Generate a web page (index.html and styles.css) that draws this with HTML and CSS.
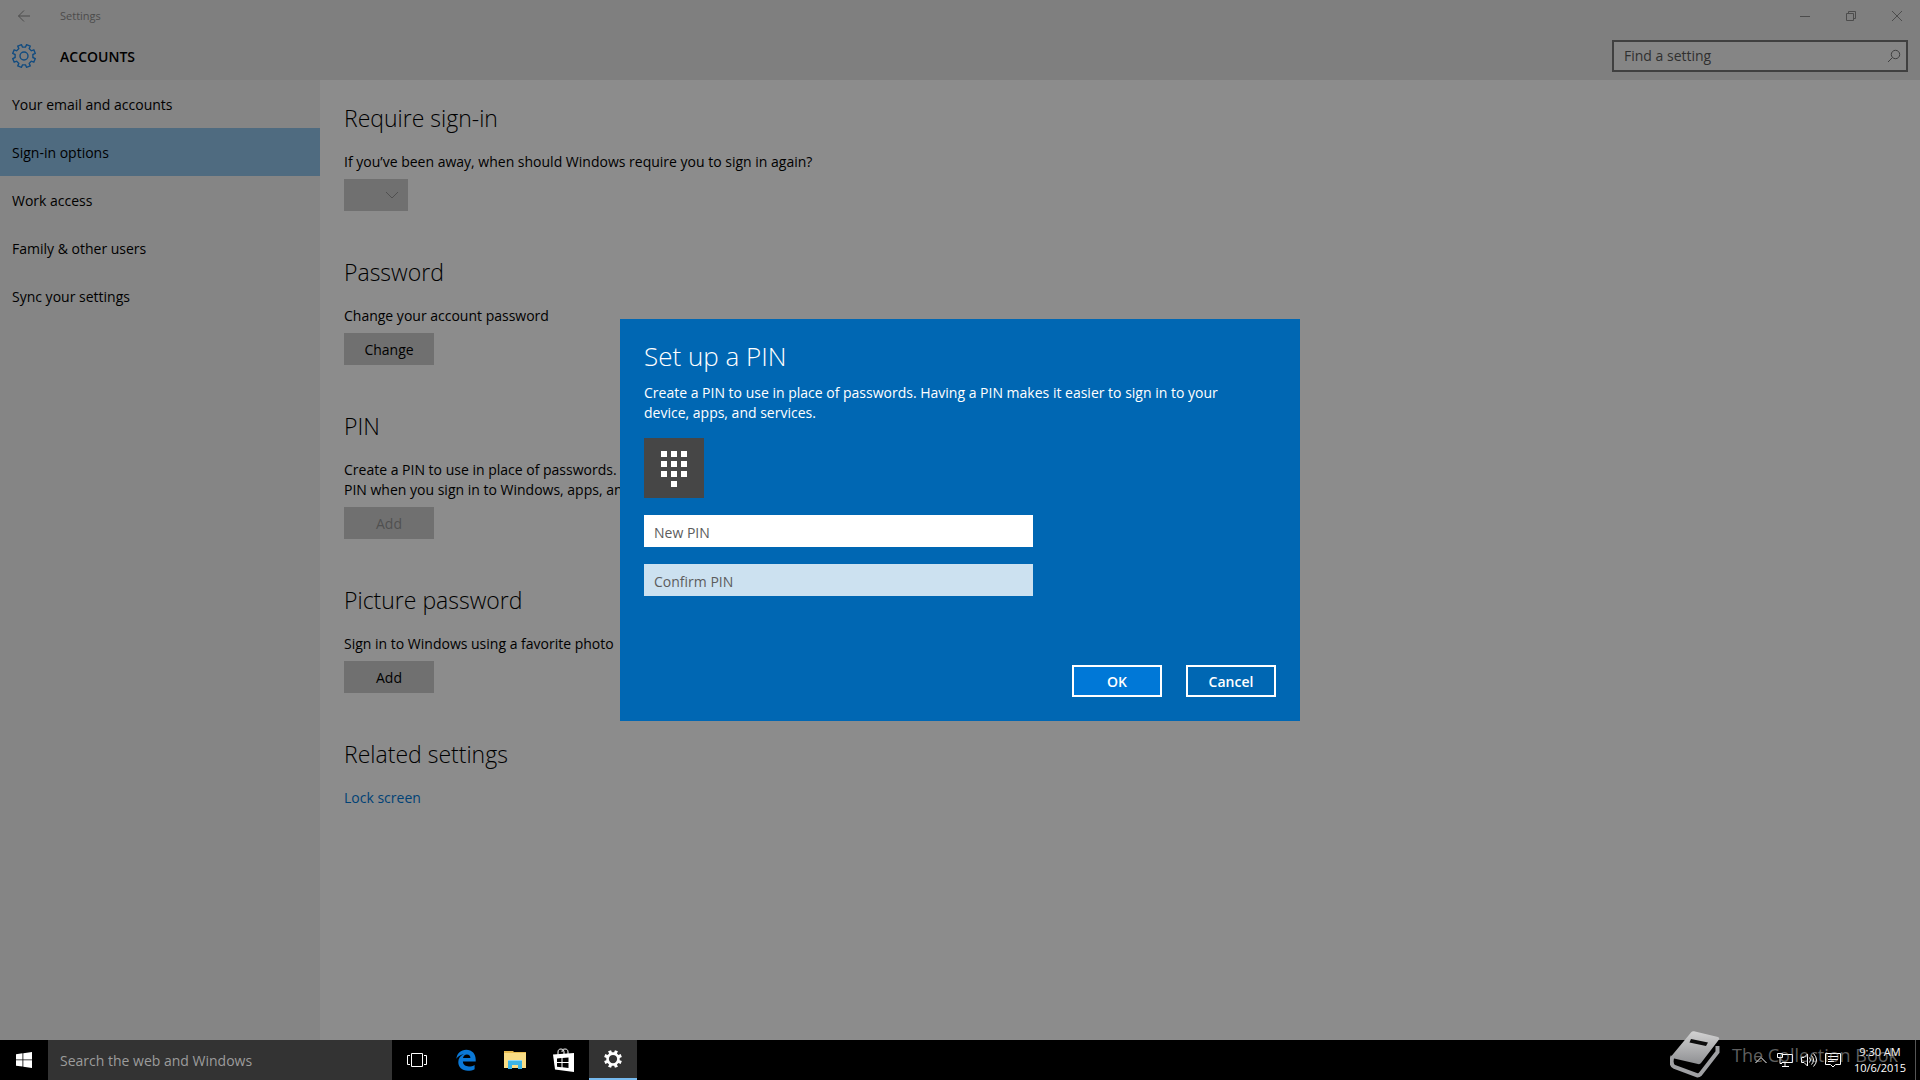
FILE: index.html
```html
<!DOCTYPE html>
<html lang="en">
<head>
  <meta charset="UTF-8">
  <meta name="viewport" content="width=device-width, initial-scale=1.0">
  <title>Settings</title>

  <link rel="stylesheet" href="styles.css">
</head>
<body>

  <svg class="defs" width="0" height="0" aria-hidden="true">
    <symbol id="gear" viewBox="-12 -12 24 24">
      <path d="M8.9 1.5L11.3 2.6 9.8 6.2 7.3 5.2 5.2 7.3 6.2 9.8 2.6 11.3 1.5 8.9-1.5 8.9-2.6 11.3-6.2 9.8-5.2 7.3-7.3 5.2-9.8 6.2-11.3 2.6-8.9 1.5-8.9-1.5-11.3-2.6-9.8-6.2-7.3-5.2-5.2-7.3-6.2-9.8-2.6-11.3-1.5-8.9 1.5-8.9 2.6-11.3 6.2-9.8 5.2-7.3 7.3-5.2 9.8-6.2 11.3-2.6 8.9-1.5z"/>
      <circle r="4"/>
    </symbol>
  </svg>

  <div class="window">
    <header class="header">
      <div class="titlebar">
        <button class="back" aria-label="Back">
          <svg width="14" height="14" viewBox="0 0 14 14"><path d="M13 7H1.5M7 1.5L1.5 7 7 12.5"/></svg>
        </button>
        <span class="window-title">Settings</span>
        <div class="window-buttons">
          <button aria-label="Minimize">
            <svg width="12" height="12" viewBox="0 0 12 12"><path d="M1 6.5h10"/></svg>
          </button>
          <button aria-label="Restore">
            <svg width="12" height="12" viewBox="0 0 12 12"><path d="M1.5 3.5h7v7h-7zM3.5 3.5v-2h7v7h-2"/></svg>
          </button>
          <button aria-label="Close">
            <svg width="12" height="12" viewBox="0 0 12 12"><path d="M1 1l10 10M11 1L1 11"/></svg>
          </button>
        </div>
      </div>
      <div class="header-row">
        <svg class="header-gear" width="24" height="24"><use href="#gear"/></svg>
        <h1>ACCOUNTS</h1>
        <div class="find">
          <input type="text" placeholder="Find a setting" aria-label="Find a setting">
          <svg width="14" height="14" viewBox="0 0 14 14"><circle cx="8.5" cy="5.5" r="4.2"/><path d="M5.5 8.5L1 13"/></svg>
        </div>
      </div>
    </header>

    <div class="body">
      <nav class="sidebar">
        <a href="#">Your email and accounts</a>
        <a href="#" class="active">Sign-in options</a>
        <a href="#">Work access</a>
        <a href="#">Family &amp; other users</a>
        <a href="#">Sync your settings</a>
      </nav>

      <main class="content">
        <section>
          <h2>Require sign-in</h2>
          <label for="require">If you’ve been away, when should Windows require you to sign in again?</label>
          <div class="select">
            <select id="require" disabled></select>
            <svg width="14" height="8" viewBox="0 0 14 8"><path d="M1 1l6 6 6-6"/></svg>
          </div>
        </section>
        <section>
          <h2>Password</h2>
          <p>Change your account password</p>
          <button class="btn">Change</button>
        </section>
        <section>
          <h2>PIN</h2>
          <p>Create a PIN to use in place of passwords. You’ll be asked for this PIN when you sign in to Windows, apps, and services.</p>
          <button class="btn" disabled>Add</button>
        </section>
        <section>
          <h2>Picture password</h2>
          <p>Sign in to Windows using a favorite photo</p>
          <button class="btn">Add</button>
        </section>
        <section>
          <h2>Related settings</h2>
          <p><a href="#">Lock screen</a></p>
        </section>
      </main>
    </div>

    <div class="overlay">
      <form class="dialog" role="dialog" aria-labelledby="dialog-title">
        <h2 id="dialog-title">Set up a PIN</h2>
        <p>Create a PIN to use in place of passwords. Having a PIN makes it easier to sign in to your device, apps, and services.</p>
        <div class="keypad">
          <svg width="26" height="36" viewBox="0 0 26 36">
            <path d="M0 0h6v6H0zM10 0h6v6h-6zM20 0h6v6h-6zM0 10h6v6H0zM10 10h6v6h-6zM20 10h6v6h-6zM0 20h6v6H0zM10 20h6v6h-6zM20 20h6v6h-6zM10 30h6v6h-6z"/>
          </svg>
        </div>
        <input type="password" placeholder="New PIN" aria-label="New PIN">
        <input type="password" class="inactive" placeholder="Confirm PIN" aria-label="Confirm PIN">
        <div class="actions">
          <button type="button" class="ok">OK</button>
          <button type="button">Cancel</button>
        </div>
      </form>
    </div>
  </div>

  <footer class="taskbar">
    <button class="task start" aria-label="Start">
      <svg width="16" height="16" viewBox="0 0 16 16"><path d="M0 2.2L6.5 1.3V7.5H0zM7.3 1.2L16 0v7.5H7.3zM0 8.3h6.5v6.3L0 13.7zM7.3 8.3H16V16l-8.7-1.2z"/></svg>
    </button>
    <input class="task-search" type="text" placeholder="Search the web and Windows" aria-label="Search the web and Windows">
    <div class="tasks">
      <button class="task" aria-label="Task View">
        <svg class="line" width="20" height="14" viewBox="0 0 20 14"><path d="M4.5.5h11v13h-11zM3 2.5H.5v9H3M17 2.5h2.5v9H17"/></svg>
      </button>
      <button class="task" aria-label="Microsoft Edge">
        <svg width="20" height="22" viewBox="0 0 20 22"><path fill="#0a78d6" d="M.3 9.8C1 4.3 4.9.7 10.2.7c6 0 9.5 4.3 9.5 9.7v2.2H6.9c.2 3.3 2.7 4.9 6 4.9 2.2 0 4.1-.6 5.7-1.6v4.3c-1.9 1-4.1 1.5-6.7 1.5-6 0-9.6-3.3-9.6-8.6 0-3.6 2-6.6 5.5-8.1C4.7 5.7 2.2 7.1.3 9.8zM7 9h7.4c0-2.3-1.2-3.6-3.5-3.6C8.7 5.4 7.3 7 7 9z"/></svg>
      </button>
      <button class="task" aria-label="File Explorer">
        <svg width="22" height="20" viewBox="0 0 22 20">
          <path fill="#e8bc50" d="M0 1h9l1 1h12v4H0z"/>
          <path fill="#f9dd85" d="M0 3h22v15H0z"/>
          <path fill="#3cb4e6" d="M4 10h14v9h-4v-4H8v4H4z"/>
          <path fill="#8cd8f6" d="M4 10h14v1H4z"/>
        </svg>
      </button>
      <button class="task" aria-label="Store">
        <svg width="22" height="24" viewBox="0 0 22 24">
          <path fill="none" stroke="#fff" d="M5 7V4c0-2 1-3 3-3s3 1.5 3 3v2M9 4c0-2 1-3 3-3s3 1 3 3v2"/>
          <path d="M0 6.5L21 5v19L2 21.5z"/>
          <path fill="#000" d="M4 10.4l4.5-.4v4H4zM9.500 9.900l6-.5V14h-6zM4 15h4.500v4.200L4 18.700zM9.500 15h6v5l-6-.7z"/>
        </svg>
      </button>
      <button class="task active" aria-label="Settings">
        <svg width="18" height="18" viewBox="-12 -12 24 24">
          <path fill-rule="evenodd" d="M8.9 1.5L11.8 2.6 10.2 6.6 7.3 5.2 5.2 7.3 6.6 10.2 2.6 11.8 1.5 8.9-1.5 8.9-2.6 11.8-6.6 10.2-5.2 7.3-7.3 5.2-10.2 6.6-11.8 2.6-8.9 1.5-8.9-1.5-11.8-2.6-10.2-6.6-7.3-5.2-5.2-7.3-6.6-10.2-2.6-11.8-1.5-8.9 1.5-8.9 2.6-11.8 6.6-10.2 5.2-7.3 7.3-5.2 10.2-6.6 11.8-2.6 8.9-1.5zM5.5 0a5.5 5.5 0 1 0-11 0 5.5 5.5 0 1 0 11 0z"/>
        </svg>
      </button>
    </div>

    <div class="tray">
      <svg width="16" height="16" viewBox="0 0 16 16"><path d="M2.5 11L8 5.5 13.5 11"/></svg>
      <svg width="16" height="16" viewBox="0 0 16 16"><path d="M4.5 2.5h11v8h-11M8 11v3.5M5 14.5h7M.5 1.5h5v4h-5zM3 5.5v6h2"/></svg>
      <svg width="16" height="16" viewBox="0 0 16 16"><path d="M.5 5.5H3L6.5 2v12L3 10.5H.5zM8.5 5.5q2 2.5 0 5M10.5 3.5q4 4.5 0 9M12.5 1.5q6 6.5 0 13"/></svg>
      <svg width="16" height="16" viewBox="0 0 16 16"><path d="M.5 1.5h15v11h-5L8 15l-2.5-2.5h-5zM3 4.5h10M3 7.5h10M3 9.5h6"/></svg>
      <div class="clock">
        <div>9:30 AM</div>
        <div>10/6/2015</div>
      </div>
    </div>
  </footer>

  <div class="watermark">
    <svg width="50" height="48" viewBox="0 0 50 48">
      <defs>
        <linearGradient id="cover" x1="0" y1="0" x2="0" y2="1">
          <stop offset="0" stop-color="#d2d2d2"/>
          <stop offset="1" stop-color="#8f9093"/>
        </linearGradient>
      </defs>
      <path fill="url(#cover)" d="M21 1.5Q22 0 24 .2L48 6q2 .7 1 2.5L31 32q-1 1.5-3 1L2 27q-1.5-.5-.5-2z"/>
      <path fill="#0c0c0c" d="M21 8l-1.5 3.5L36 15l2-3.5z"/>
      <path fill="none" stroke="#a0a1a4" stroke-width="4" d="M2.5 25q-2.5 9 2 11l23 8.5q1.5 0 3-1.5l17-22v-6"/>
    </svg>
    <span>The Collection Book</span>
  </div>

</body>
</html>
```
FILE: styles.css
```css
* {
  margin: 0;
  padding: 0;
  box-sizing: border-box;
}

body {
  display: flex;
  flex-direction: column;
  min-height: 100vh;
  font-family: "Open Sans", "Noto Sans", sans-serif;
  font-size: 14px;
  line-height: 20px;
  color: #000;
  background: #000;
}

input, button, select {
  font: inherit;
  color: inherit;
  border: none;
  border-radius: 0;
  outline: none;
}

button {
  background: none;
}

svg {
  display: block;
}

.defs {
  position: absolute;
}

.window {
  position: relative;
  flex: 1;
  display: flex;
  flex-direction: column;
  background: #8c8c8c;
}

/* header */

.header {
  height: 80px;
  background: #7f7f7f;
}

.titlebar {
  display: flex;
  align-items: center;
  height: 32px;
  font-size: 11px;
  color: #4c4c4c;
}

.titlebar svg {
  margin: 0 auto;
  fill: none;
  stroke: #4c4c4c;
}

.back {
  width: 48px;
  height: 32px;
}

.window-title {
  margin-left: 12px;
}

.window-buttons {
  display: flex;
  margin-left: auto;
}

.window-buttons button {
  width: 46px;
  height: 32px;
}

.header-row {
  display: flex;
  align-items: center;
  padding: 8px 12px;
}

.header-gear {
  fill: none;
  stroke: #124c80;
  stroke-width: 1.4;
}

.header h1 {
  margin-left: 24px;
  padding-top: 2px;
  font-size: 14px;
  font-weight: 600;
}

.find {
  display: flex;
  align-items: center;
  width: 296px;
  height: 32px;
  margin-left: auto;
  padding: 0 5px 0 10px;
  border: 2px solid #404040;
  background: #858585;
}

.find input {
  flex: 1;
  min-width: 0;
  background: none;
}

.find input::placeholder {
  color: #303030;
}

.find svg {
  fill: none;
  stroke: #404040;
}

/* body */

.body {
  flex: 1;
  display: flex;
}

.sidebar {
  width: 320px;
  background: #858585;
}

.sidebar a {
  display: block;
  padding: 15px 12px 13px;
  color: #000;
  text-decoration: none;
}

.sidebar a.active {
  background: #4f6b80;
}

.content {
  flex: 1;
  padding: 22px 24px 0;
}

.content section {
  margin-bottom: 45px;
}

.content h2 {
  margin-bottom: 18px;
  font-size: 23px;
  font-weight: 300;
  line-height: 32px;
}

.content p,
.content label {
  display: block;
  margin-bottom: 7px;
}

.content p {
  max-width: 440px;
}

.content a {
  color: #004276;
  text-decoration: none;
}

.btn {
  display: block;
  width: 90px;
  height: 32px;
  padding-top: 2px;
  background: #707070;
}

.btn:disabled {
  color: #505050;
}

.select {
  display: flex;
  align-items: center;
  justify-content: flex-end;
  width: 64px;
  height: 32px;
  padding-right: 9px;
  background: #707070;
}

.select select {
  flex: 1;
  min-width: 0;
  height: 32px;
  appearance: none;
  background: none;
}

.select svg {
  fill: none;
  stroke: #505050;
}

/* dialog */

.overlay {
  position: absolute;
  inset: 0;
  display: flex;
  align-items: center;
  justify-content: center;
}

.dialog {
  width: 680px;
  padding: 21px 24px 24px;
  color: #fff;
  background: #0067b3;
}

.dialog h2 {
  margin-bottom: 11px;
  font-size: 26px;
  font-weight: 300;
  line-height: 32px;
}

.dialog p {
  max-width: 592px;
  margin-bottom: 15px;
}

.keypad {
  display: flex;
  align-items: center;
  justify-content: center;
  width: 60px;
  height: 60px;
  margin-bottom: 17px;
  padding-top: 2px;
  background: #464646;
}

.keypad svg {
  fill: #fff;
}

.dialog input {
  display: block;
  width: 389px;
  height: 32px;
  margin-bottom: 17px;
  padding: 2px 10px 0;
  color: #000;
  background: #fff;
}

.dialog input.inactive {
  background: #cce1f0;
}

.dialog input::placeholder {
  color: #5c5c5c;
}

.actions {
  display: flex;
  justify-content: flex-end;
  gap: 24px;
  margin-top: 69px;
}

.actions button {
  width: 90px;
  height: 32px;
  padding-top: 2px;
  border: 2px solid #fff;
  font-weight: 600;
}

.actions .ok {
  background: #0078d7;
}

/* taskbar */

.taskbar {
  display: flex;
  height: 40px;
  color: #fff;
  background: #000;
}

.task {
  display: flex;
  align-items: center;
  justify-content: center;
  width: 48px;
  height: 40px;
}

.task svg {
  fill: #fff;
}

.task .line {
  fill: none;
  stroke: #fff;
}

.task.active {
  border-bottom: 2px solid #76b9ed;
  background: #333;
}

.task-search {
  width: 344px;
  padding: 2px 12px 0;
  background: #333;
}

.task-search::placeholder {
  color: #9c9c9c;
}

.tasks {
  display: flex;
  gap: 1px;
  padding-left: 1px;
}

.tray {
  display: flex;
  align-items: center;
  gap: 8px;
  margin-left: auto;
  margin-right: 4px;
  padding-right: 9px;
  border-right: 1px solid #555;
}

.tray svg {
  fill: none;
  stroke: #fff;
}

.clock {
  margin-left: 5px;
  font-size: 11px;
  line-height: 16px;
  text-align: center;
}

.watermark {
  position: absolute;
  right: 22px;
  bottom: 1px;
  display: flex;
  align-items: center;
  gap: 12px;
  font-size: 18px;
  color: rgba(190, 190, 190, 0.5);
  pointer-events: none;
}
```
